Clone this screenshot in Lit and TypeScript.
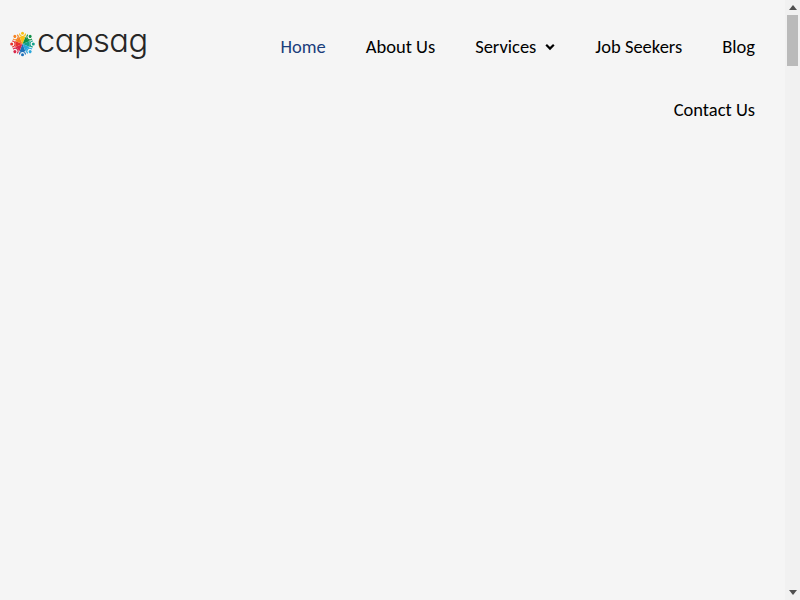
import { LitElement, html, css, svg } from "lit";
import { customElement } from "lit/decorators.js";

const wedges = [
  ["#f9c015", 0], ["#0f8f45", 45], ["#12a08a", 90], ["#2aa7dc", 135],
  ["#1d6fb8", 180], ["#d9264a", 225], ["#e8322e", 270], ["#f58220", 315],
] as const;

@customElement("app-root")
export class AppRoot extends LitElement {
  static styles = css`
    :host { display: flex; width: 800px; height: 600px; background: #f5f5f5; overflow: hidden; font-family: "Carlito", "Lato", sans-serif; }
    .page { flex: 1; min-width: 0; }
    header { display: flex; align-items: flex-start; padding: 15px 10px 0; }
    .logo { display: flex; align-items: center; gap: 2px; height: 58px; width: 180px; flex: none; }
    .logo span { font: 350 32px/32px "Inter", sans-serif; font-feature-settings: "cv11" 1; color: #262626; letter-spacing: -0.5px; margin-bottom: 7px; transform: scaleX(1.02); transform-origin: left center; }
    .logo svg { width: 25px; height: 26px; flex: none; }
    nav { display: flex; flex-wrap: wrap; justify-content: flex-end; flex: 1; }
    nav a { display: flex; align-items: center; gap: 9px; padding: 20px; font-size: 18.5px; line-height: 23px; color: #000; white-space: nowrap; }
    nav a.active { color: #1a3e7c; }
    nav svg { width: 10px; height: 8px; }
    .bar { width: 15px; display: flex; flex-direction: column; align-items: center; background: #f1f1f1; }
    .btn { height: 15px; flex: none; display: flex; align-items: center; justify-content: center; }
    .btn svg { width: 8px; height: 5px; fill: #505050; }
    .track { flex: 1; width: 100%; display: flex; justify-content: center; }
    .thumb { width: 11px; height: 51px; background: #bababa; }
  `;

  render() {
    return html`
      <div class="page">
        <header>
          <div class="logo">
            <svg viewBox="-12.5 -13 25 26" aria-hidden="true">
              ${wedges.map(([c, a]) => svg`<g transform="rotate(${a})">
                <path d="M0 0 L-3 -7.4 Q0 -6.4 3 -7.4 Z" fill=${c} />
                <path d="M-3 -10.4 A3 3 0 0 0 3 -10.4" fill="none" stroke=${c} stroke-width="1.1" />
                <circle cx="0" cy="-10.8" r="1.5" fill=${c} />
              </g>`)}
            </svg>
            <span>capsag</span>
          </div>
          <nav>
            <a class="active">Home</a>
            <a>About Us</a>
            <a>Services
              <svg viewBox="0 0 10 8" aria-hidden="true"><path d="M1.2 1.8 L5 5.6 L8.8 1.8" fill="none" stroke="#000" stroke-width="2.2" /></svg>
            </a>
            <a>Job Seekers</a>
            <a>Blog</a>
            <a>Contact Us</a>
          </nav>
        </header>
      </div>
      <div class="bar">
        <div class="btn"><svg viewBox="0 0 8 5"><path d="M4 0 L8 5 L0 5 Z" /></svg></div>
        <div class="track"><div class="thumb"></div></div>
        <div class="btn"><svg viewBox="0 0 8 5"><path d="M0 0 L8 0 L4 5 Z" /></svg></div>
      </div>
    `;
  }
}
